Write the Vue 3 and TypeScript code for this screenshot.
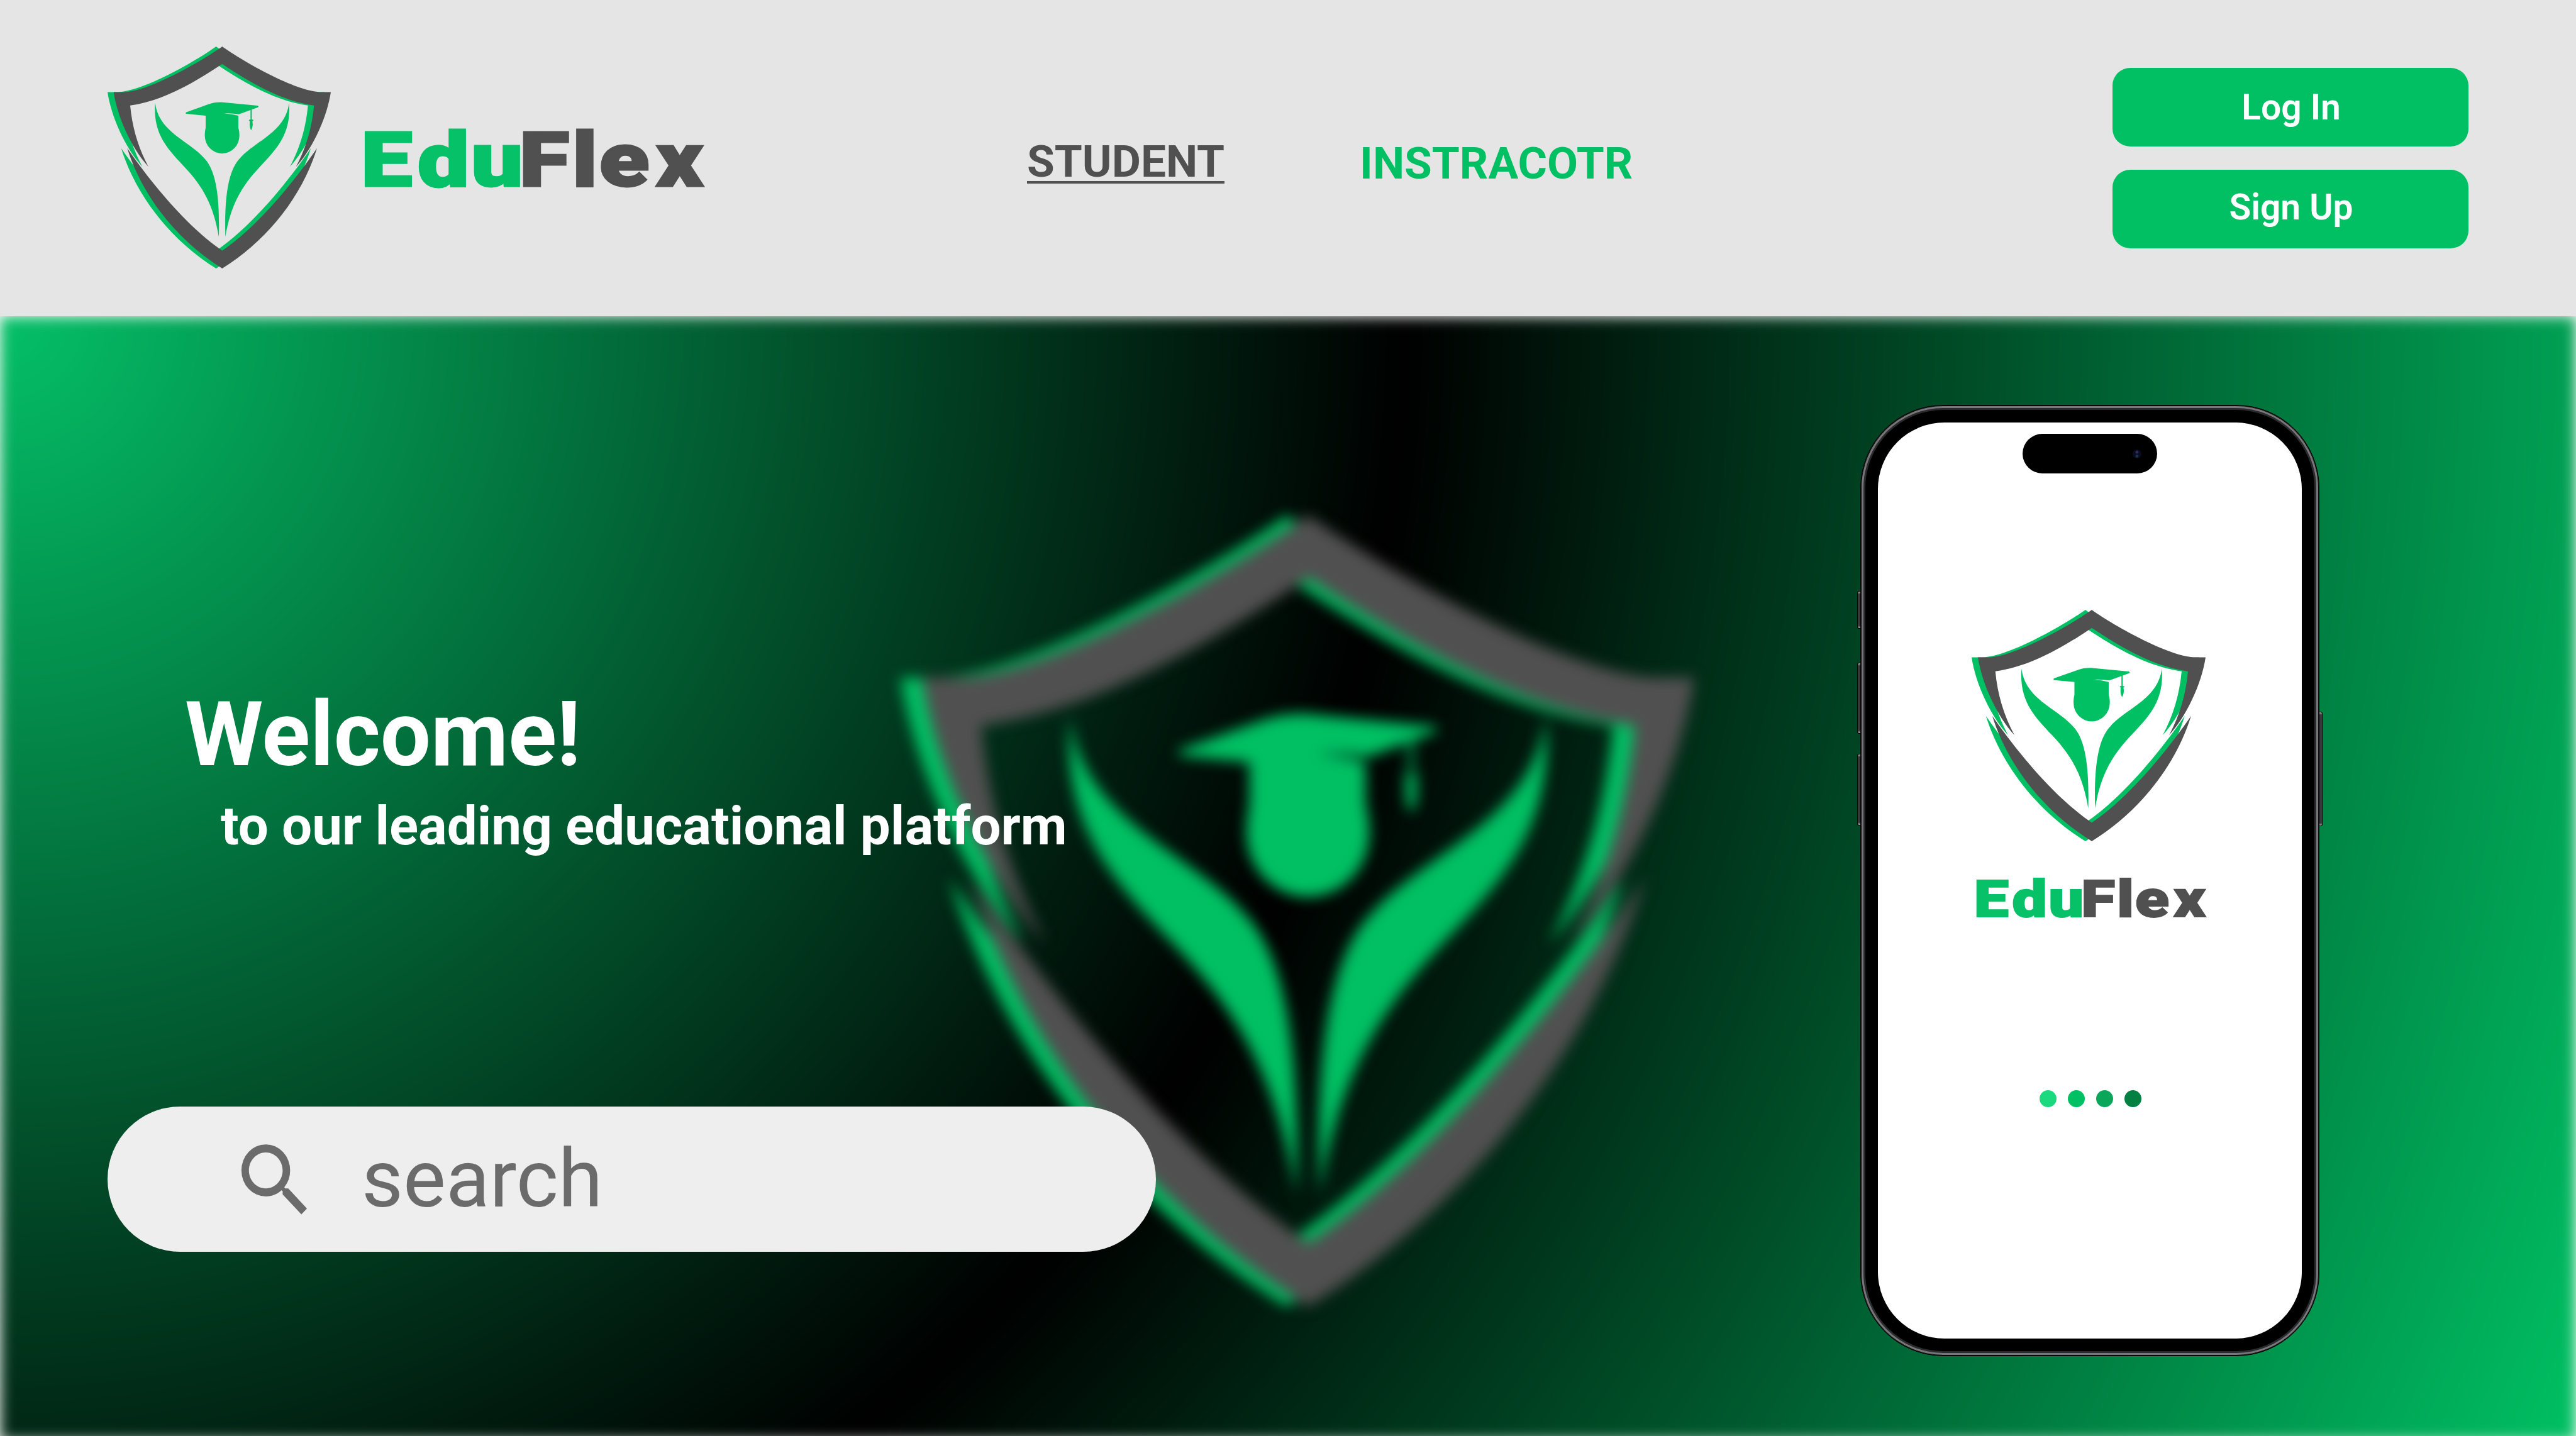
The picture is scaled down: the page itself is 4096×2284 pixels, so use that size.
<script setup lang="ts">
import { defineComponent, h } from 'vue'

const shield =
  'M610 72C720 150 960 284 1076 289L1128 289C1110 410 1040 560 962 645C1010 555 1038 460 1048 353C900 332 760 255 610 155C460 255 320 332 171 353C181 460 210 555 258 645C180 560 110 410 92 289L144 289C260 284 500 150 610 72Z' +
  'M157 557C270 720 440 930 610 1045C780 930 950 720 1062 557C990 790 820 1000 610 1130C400 1000 230 790 157 557Z'
const wing =
  'M929 340C912 480 770 520 696 603C640 660 620 780 625 980C650 830 700 740 790 645C870 560 940 490 929 340Z'
const graduate =
  'M439 385L545 347Q570 337 605 337L778 354Q787 357 780 362L690 395Q655 389 620 391Q655 393 687 402V460C691 472 692 484 692 497A82.5 85 0 0 1 527 497C527 484 528 472 531 460V402L439 393Q432 389 439 385Z' +
  'M745 373H751V420Q760 421 759 424Q758 427 754 427Q758 445 753 460L748 471L743 460Q739 445 742 427Q738 427 737 424Q737 421 745 420Z'

const ShieldLogo = defineComponent({
  render: () =>
    h('svg', { viewBox: '63 72 1065 1058', preserveAspectRatio: 'none' }, [
      h('path', { d: shield, fill: '#00c063', transform: 'translate(-29 0)' }),
      h('path', { d: shield, fill: '#505050' }),
      h('path', { d: wing, fill: '#00c063' }),
      h('path', { d: wing, fill: '#00c063', transform: 'translate(1219 0) scale(-1 1)' }),
      h('path', { d: graduate, fill: '#00c063' }),
    ]),
})

const Wordmark = defineComponent({
  render: () =>
    h('svg', { viewBox: '0 0 540 96', overflow: 'visible' }, [
      h('g', { transform: 'scale(1.22 1)' }, [
        h('text', { x: '-5.2 68.6 138.6', y: 91.4, fill: '#06c167', stroke: '#06c167' }, 'Edu'),
        h('text', { x: '201.2 270.2 305.6 379.3', y: 91.4, fill: '#505050', stroke: '#505050' }, 'Flex'),
      ]),
    ]),
})

const dots: string[] = ['#1bd97f', '#00c063', '#0aa75b', '#018042']
</script>

<template>
  <div class="page">
    <header class="header">
      <div class="brand">
        <ShieldLogo class="brand-logo" />
        <Wordmark class="wordmark brand-name" />
      </div>
      <nav class="nav">
        <a class="tab active">STUDENT</a>
        <a class="tab">INSTRACOTR</a>
      </nav>
      <div class="actions">
        <button class="btn">Log In</button>
        <button class="btn signup">Sign Up</button>
      </div>
    </header>

    <main class="hero">
      <div class="backdrop"></div>
      <ShieldLogo class="watermark" />
      <section class="intro">
        <h1>Welcome!</h1>
        <p>to our leading educational platform</p>
        <div class="search">
          <svg class="search-icon" viewBox="0 0 24 24" preserveAspectRatio="none">
            <path fill="#6b6b6b" d="M15.5 14h-.79l-.28-.27A6.47 6.47 0 0 0 16 9.5 6.5 6.5 0 1 0 9.5 16c1.61 0 3.09-.59 4.23-1.57l.27.28v.79l5 4.99L20.49 19l-4.99-5zm-6 0C7.01 14 5 11.99 5 9.5S7.01 5 9.5 5 14 7.01 14 9.5 11.99 14 9.5 14z" />
          </svg>
          <span>search</span>
        </div>
      </section>

      <section class="phone">
        <i class="key k1"></i><i class="key k2"></i><i class="key k3"></i><i class="key k4"></i>
        <div class="rim">
          <div class="screen">
            <div class="island"><i class="camera"></i></div>
            <ShieldLogo class="screen-logo" />
            <Wordmark class="wordmark screen-name" />
            <div class="dots">
              <i v-for="c in dots" :key="c" :style="{ background: c }"></i>
            </div>
          </div>
        </div>
      </section>
    </main>
  </div>
</template>

<style>
body {
  margin: 0;
  background: #fff;
}
</style>

<style scoped>
.page {
  width: 4096px;
  height: 2284px;
  overflow: hidden;
  background: #fff;
  font-family: Roboto, sans-serif;
}
.header {
  position: relative;
  z-index: 1;
  display: flex;
  box-sizing: border-box;
  height: 503px;
  padding: 74px 171px 0;
  background: #e5e5e5;
}
.brand {
  display: flex;
  width: 1462px;
}
.brand-logo {
  width: 355px;
  height: 353px;
}
.wordmark {
  display: block;
  font-family: Roboto, sans-serif;
  font-weight: 900;
  font-size: 120px;
  stroke-width: 2.8px;
}
.brand-name {
  width: 540px;
  height: 96px;
  margin: 131px 0 0 54px;
}
.nav {
  display: flex;
  gap: 215px;
  width: 1726px;
  padding-top: 143px;
}
.tab {
  height: 80px;
  font-size: 71.1px;
  line-height: 80px;
  font-weight: 700;
  color: #00c063;
}
.tab + .tab {
  margin-top: 3px;
}
.active {
  height: 71px;
  color: #505050;
  border-bottom: 4px solid #505050;
}
.actions {
  display: flex;
  flex-direction: column;
  gap: 37px;
  padding-top: 34px;
}
.btn {
  width: 566px;
  height: 125px;
  padding: 0 0 0 2px;
  border: 0;
  border-radius: 28px;
  background: #00c063;
  color: #fff;
  font: 600 56.9px/125px Roboto, sans-serif;
}
.signup {
  padding-bottom: 5px;
  line-height: 120px;
}
.hero {
  position: relative;
  display: flex;
  width: 4096px;
  height: 1781px;
}
.backdrop {
  position: absolute;
  inset: 0 0 -8px;
  background: radial-gradient(circle 4466px at 0 0, #04c067 0%, #000 50%, #00c063 100%);
  filter: blur(11px);
}
.watermark {
  position: absolute;
  left: 1432px;
  top: 317px;
  width: 1262px;
  height: 1258px;
  filter: blur(11px);
}
.intro {
  position: relative;
  flex: none;
  width: 2958px;
  padding: 586px 0 0 171px;
  box-sizing: border-box;
  color: #fff;
}
h1 {
  margin: 0 0 15px 123px;
  font-size: 142.2px;
  line-height: 160px;
  font-weight: 700;
}
p {
  margin: 0 0 396px 180px;
  font-size: 85.3px;
  line-height: 100px;
  font-weight: 700;
}
.search {
  display: flex;
  align-items: center;
  width: 1667px;
  height: 231px;
  border-radius: 116px;
  background: #eee;
  color: #6b6b6b;
  font-size: 128px;
  line-height: 231px;
}
.search-icon {
  width: 143px;
  height: 153px;
  margin: 3px 66px 0 195px;
}
.phone {
  position: relative;
  flex: none;
  width: 730px;
  height: 1513px;
  margin-top: 141px;
}
.key {
  position: absolute;
  left: -5px;
  width: 7px;
  box-sizing: border-box;
  border: 1.5px solid #000;
  border-right: 0;
  border-radius: 3px 0 0 3px;
  background: linear-gradient(#aaa, #38383a 4px, #38383a calc(100% - 4px), #aaa);
}
.k1 {
  top: 296px;
  height: 60px;
}
.k2 {
  top: 410px;
  height: 113px;
}
.k3 {
  top: 555px;
  height: 114px;
}
.k4 {
  left: auto;
  right: -5px;
  top: 488px;
  height: 182px;
  transform: scaleX(-1);
}
.rim {
  position: relative;
  box-sizing: border-box;
  width: 730px;
  height: 1513px;
  padding: 27px;
  border: 1px solid #000;
  border-radius: 132px;
  background: #000;
  box-shadow: inset 0 0 0 1px #0c0c0d, inset 0 0 0 4px #77777b, inset 0 0 0 7px #2b2b2d;
}
.screen {
  display: flex;
  flex-direction: column;
  align-items: center;
  box-sizing: border-box;
  width: 674px;
  height: 1457px;
  padding-top: 18px;
  border-radius: 106px;
  background: #fff;
}
.island {
  display: flex;
  align-items: center;
  justify-content: flex-end;
  box-sizing: border-box;
  width: 214px;
  height: 63px;
  padding-right: 25px;
  border-radius: 32px;
  background: #000;
}
.camera {
  width: 14px;
  height: 14px;
  border-radius: 50%;
  background:
    radial-gradient(circle at 50% 30%, #2e2e62 0 1.5px, transparent 3px),
    radial-gradient(circle at 50% 75%, #1a3550 0 1.5px, transparent 3px),
    #0b0b20;
}
.screen-logo {
  width: 372px;
  height: 368px;
  margin: 217px 0 0 -4px;
}
.screen-name {
  width: 367px;
  height: 65px;
  margin: 58px 0 0 5px;
}
.dots {
  display: flex;
  gap: 18px;
  margin: 273px 0 0 2px;
}
.dots i {
  width: 27px;
  height: 27px;
  border-radius: 50%;
}
</style>
